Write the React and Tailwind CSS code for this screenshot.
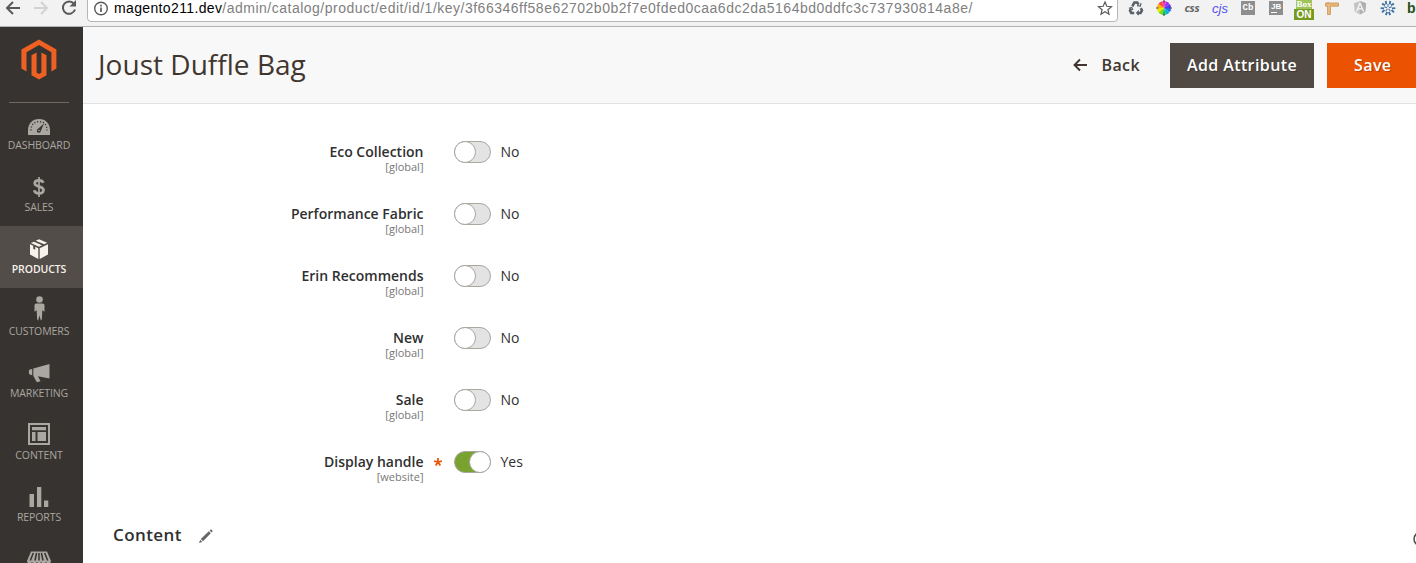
import React from "react";

function MagentoLogo() {
  return (
    <svg width="36" height="42" viewBox="0 0 36 42" fill="#ee6123">
      <path d="M18 0.5 35.4 10.5V29.5L30.4 32.4V13.2L18 6 5.5 13.2V32.4L0.4 29.5V10.5Z" />
      <path d="M10.5 16.3 15.6 13.4V33.5L18 35 20.4 33.5V13.4L25.5 16.3V36.2L18 40.6 10.5 36.2Z" />
    </svg>
  );
}

const icons = {
  dashboard: (
    <svg width="24" height="24" viewBox="0 0 24 24">
      <path d="M1 20V15.5C1 8.500 5.500 4 12 4s11 4.500 11 11.500V20Z" fill="currentColor" />
      <path d="M4 15.500C4 9.500 7 6.700 12 6.700s8 2.800 8 8.800" fill="none" stroke="#373330" strokeWidth="1.300" strokeDasharray="1.200 1.700" />
      <path d="M17 8.500 13.800 16a2 2 0 1 1-3-2Z" fill="#373330" />
      <circle cx="12" cy="15.500" r=".8" fill="currentColor" />
    </svg>
  ),
  sales: (
    <svg width="24" height="24" viewBox="0 0 24 24" fill="none" stroke="currentColor">
      <path d="M16.300 7.800C15.700 6 14 5.300 12 5.300c-2.600 0-4.300 1.100-4.300 3 0 4.300 8.800 2.300 8.800 6.700 0 2-1.800 3.400-4.500 3.400-2.500 0-4.300-1-4.800-3.200" strokeWidth="2.700" />
      <path d="M12 2v20" strokeWidth="1.700" />
    </svg>
  ),
  products: (
    <svg width="24" height="24" viewBox="0 0 24 24" fill="currentColor">
      <path d="m8.700 3.800 3.300-1.600 8.200 3.500-3 1.500ZM7 4.700l8 3.600-3 1.400-8.200-3.600Z" />
      <path d="m3 7.300 3.200 1.400v3l2 1.100V9.700l3.100 1.500V22L3 17.600ZM21 7.300v10.300L12.700 22V11.200Z" />
    </svg>
  ),
  customers: (
    <svg width="24" height="26" viewBox="0 0 24 26" fill="currentColor">
      <circle cx="12.500" cy="4.500" r="3.300" />
      <path d="M9.500 8.600h6c1.400 0 2 .8 2 2v6.200l-2.200-1.500-.4 9-1.100 1.200-1.300-5-1.300 5-1.100-1.200-.4-9-2.200 1.500v-6.200c0-1.200.6-2 2-2Z" />
    </svg>
  ),
  marketing: (
    <svg width="24" height="24" viewBox="0 0 24 24" fill="currentColor">
      <path d="M22.500 3v14.500L11 15.200l2.500 5-3.700 1-3.500-6.500V7.500ZM5.200 7.900v6.300l-2.500-.7c-1.200-.8-1.200-4.200 0-5Z" />
    </svg>
  ),
  content: (
    <svg width="24" height="24" viewBox="0 0 24 24">
      <path d="M2 2h20v20H2Z" fill="none" stroke="currentColor" strokeWidth="2" />
      <path d="M5 5h14v3.200H5ZM5 10h3.500v9H5ZM10.500 10H19v9h-8.500Z" fill="currentColor" />
    </svg>
  ),
  reports: (
    <svg width="24" height="24" viewBox="0 0 24 24" fill="currentColor">
      <path d="M2.500 9H7v13H2.500ZM10 2h4.300v20H10ZM17 15.500h4.300V22H17Z" />
    </svg>
  ),
  stores: (
    <svg width="24" height="24" viewBox="0 0 24 24">
      <path d="M4 4.500h16l4 9.500c0 3-4 3-5 1-1.300 2-4 2-4.700 0-.8 1.500-3.800 1.500-4.600 0-.7 2-3.400 2-4.700 0-1 2-5 2-5-1Z" fill="currentColor" />
      <path d="M6.300 6 3.300 13.500M9.600 6l-1.600 7.500M14.400 6l1.600 7.500M17.700 6l3 7.500M12 6v7.500" stroke="#373330" strokeWidth="1.500" />
      <path d="M4 17v5h16v-5" fill="none" stroke="currentColor" strokeWidth="2" />
    </svg>
  ),
};

const menu = [
  ["dashboard", "DASHBOARD", ""],
  ["sales", "SALES", "-mt-[2px] mb-[2px]"],
  ["products", "PRODUCTS", "-mt-[2px] mb-[2px]"],
  ["customers", "CUSTOMERS", "-mt-[5px] mb-[5px]"],
  ["marketing", "MARKETING", "-mt-[2px] mb-[2px]"],
  ["content", "CONTENT", "-mt-[3px] mb-[3px]"],
  ["reports", "REPORTS", "-mt-[2px] mb-[2px]"],
  ["stores", "", "-mt-[2px] mb-[2px]"],
];

const attributes = [
  { label: "Eco Collection", scope: "[global]" },
  { label: "Performance Fabric", scope: "[global]" },
  { label: "Erin Recommends", scope: "[global]" },
  { label: "New", scope: "[global]" },
  { label: "Sale", scope: "[global]" },
  { label: "Display handle", scope: "[website]", on: true, required: true },
];

const wheel = ["#f43bb0", "#a52bf0", "#5a35f5", "#2a6cf0", "#00b5d8", "#22c45c", "#7ede00", "#efe600", "#ffb400", "#ff4a3a"];

function point(angle, r) {
  const a = (angle * Math.PI) / 180;
  return `${8 + r * Math.sin(a)} ${8 - r * Math.cos(a)}`;
}

function Extensions() {
  return (
    <div className="flex h-4 shrink-0 [&>span]:flex [&>span]:w-7 [&>span]:shrink-0 [&>span]:items-center [&>span]:justify-center">
      <span>
        <svg width="16" height="16" viewBox="0 0 16 16" fill="none" stroke="#56606b" strokeWidth="2.500">
          <path d="M4.300 6.300 6.300 2.600h3l1.300 2M12.800 8.200l1.200 2.300-1.400 2.400H9.600M6.200 12.900H3.300L2 10.500 3.200 8.700" />
          <path d="m9 5.600 3.300.5.700-3M10.700 10.700 8.700 13l2 2M1 8.400l2.800-1L4.900 10" strokeWidth="1.200" />
        </svg>
      </span>
      <span>
        <svg width="16" height="16" viewBox="0 0 16 16">
          {wheel.map((c, i) => (
            <path key={c} fill={c} d={`M8 8 L${point(i * 36 - 18, 6.8)} L${point(i * 36, 7.2)} L${point(i * 36 + 18, 6.8)}Z`} />
          ))}
          <path d="M8 0v2.500M8 13.500V16M0 8h2.500M13.500 8H16" stroke="#444" strokeWidth="1" />
        </svg>
      </span>
      <span className="-mt-px font-['Open_Sans',sans-serif] text-[11px] font-bold italic leading-none tracking-[-0.2px] text-[#666]">css</span>
      <span className="font-['Liberation_Sans',sans-serif] text-[13px] italic leading-none text-[#5252f0]">cjs</span>
      <span>
        <b className="flex h-[14px] w-[14px] items-center justify-center bg-[#8e8e8e] font-['Liberation_Mono',monospace] text-[9px] leading-none text-white">Cb</b>
      </span>
      <span>
        <b className="flex h-[14px] w-[14px] flex-col bg-[#8e8e8e] pl-[2px] pt-[2px] font-['Liberation_Sans',sans-serif] text-[8px] leading-none text-white">
          JB
          <i className="mt-[1px] h-px w-[6px] bg-white" />
        </b>
      </span>
      <span>
        <b className="mt-1 flex h-5 w-5 shrink-0 flex-col items-center font-['Liberation_Sans',sans-serif] leading-none text-white">
          <i className="flex h-[9px] w-4 shrink-0 items-center justify-center bg-[#a0c35c] font-['Liberation_Serif',serif] text-[9px] not-italic leading-[9px]">Box</i>
          <i className="flex h-[11px] w-5 shrink-0 items-center justify-center bg-[#779b20] text-[10px] not-italic leading-[11px]">ON</i>
        </b>
      </span>
      <span>
        <svg width="16" height="16" viewBox="0 0 16 16">
          <path d="M1.500 3h13v3.200h-8v8.300H3.500V6.200h-2Z" fill="#e9b777" stroke="#c68d4e" strokeWidth=".7" />
          <path d="M4 2v1.500" stroke="#c68d4e" />
        </svg>
      </span>
      <span>
        <svg width="14" height="16" viewBox="0 0 16 16">
          <path d="m8 0 7 2.500-1 9.500L8 15.500 2 12 1 2.500Z" fill="#c4c4c4" />
          <path d="m8 0 7 2.500-1 9.500L8 15.500Z" fill="#b0b0b0" />
          <path d="M4 12 8 2.500l4 9.500M5.700 9h4.600" fill="none" stroke="#f6f6f6" strokeWidth="1.500" />
        </svg>
      </span>
      <span>
        <svg width="16" height="16" viewBox="0 0 16 16">
          {[0, 72, 144, 216, 288].map((a) => (
            <g key={a} transform={`rotate(${a} 8 8)`} fill="none" stroke="#3b6fa5">
              <path d="M8 7V4" strokeWidth="1" />
              <path d="M5.700 1 6.300 4.300M10.300 1 9.700 4.300" strokeWidth="1.800" />
            </g>
          ))}
        </svg>
      </span>
      <b className="flex items-center pl-[5px] font-['Liberation_Sans',sans-serif] text-[14px] leading-none text-[#255216]">b</b>
    </div>
  );
}

function BrowserBar() {
  return (
    <div className="flex h-[27px] shrink-0 overflow-hidden border-b border-[#b2b2b2] bg-[#f2f2f2]">
      <div className="flex w-[87px] shrink-0 pl-[5px]">
        <svg width="80" height="17" viewBox="0 0 80 17" fill="none" strokeWidth="2">
          <path d="M15 8H2M8 2 2 8l6 6" stroke="#5a5a5a" />
          <path d="M29 8h13M36 2l6 6-6 6" stroke="#d2d2d2" />
          <path d="M69 3.800A6.200 6.200 0 1 0 70 9.500" stroke="#5a5a5a" />
          <path d="M71 0v6.500h-6.500Z" fill="#5a5a5a" />
        </svg>
      </div>
      <div className="-mt-1 flex h-[26px] w-[1031px] shrink-0 rounded-[4px] border border-[#b6b6b6] bg-white pt-[3px]">
        <svg className="ml-[6px] mt-px shrink-0" width="15" height="15" viewBox="0 0 15 15" fill="none" stroke="#5a5a5a">
          <circle cx="7" cy="7.500" r="6.300" strokeWidth="1.400" />
          <path d="M7 6.500V11M7 3.800v1.600" strokeWidth="1.700" />
        </svg>
        <div className="ml-[5px] whitespace-nowrap font-['Liberation_Sans',sans-serif] text-[14px] leading-[17px] text-[#808080]">
          <span className="tracking-[0.36px] text-black">magento211.dev</span>
          <span className="tracking-[0.5px]">/admin/catalog/product/edit/id/1/key/3f66346ff58e62702b0b2f7e0fded0caa6dc2da5164bd0ddfc3c737930814a8e/</span>
        </div>
        <svg className="ml-auto mr-[4px] shrink-0" width="16" height="16" viewBox="0 0 16 16">
          <path d="m8 2 1.800 4.300 4.700.4-3.600 3 1.100 4.500-4-2.400-4 2.400 1.100-4.500-3.600-3 4.700-.4Z" fill="none" stroke="#5a5a5a" strokeWidth="1.200" />
        </svg>
      </div>
      <div className="ml-[4px] flex">
        <Extensions />
      </div>
    </div>
  );
}

function Toggle({ on }) {
  return (
    <span className={`flex h-[22px] w-[37px] shrink-0 rounded-full border border-[#aaa6a0] ${on ? "justify-end bg-[#79a22e]" : "bg-[#e3e3e3]"}`}>
      <span className="-m-px h-[22px] w-[22px] rounded-full border border-[#aaa6a0] bg-white" />
    </span>
  );
}

export default function App() {
  return (
    <div className="flex h-[563px] w-[1416px] flex-col overflow-hidden bg-white font-['Open_Sans',sans-serif] text-[#303030]">
      <BrowserBar />
      <div className="flex min-h-0 flex-1">
        <aside className="flex w-[83px] shrink-0 flex-col overflow-hidden bg-[#373330]">
          <div className="flex h-[75px] shrink-0 justify-center pr-[5px] pt-[12px]">
            <MagentoLogo />
          </div>
          <div className="ml-[9px] h-px w-[60px] shrink-0 bg-[#736963]" />
          <nav className="-mt-px flex flex-col">
            {menu.map(([icon, label, offset]) => (
              <div
                key={icon}
                className={`flex h-[62px] shrink-0 flex-col items-center pr-[5px] pt-[13px] text-[10.500px] leading-[14px] tracking-[-0.1px] ${
                  icon === "products" ? "bg-[#524d49] font-semibold text-[#f7f3eb]" : "text-[#aaa6a0]"
                }`}
              >
                <span className={`flex h-[23px] items-center ${offset}`}>{icons[icon]}</span>
                <span>{label}</span>
              </div>
            ))}
          </nav>
        </aside>
        <main className="flex min-w-0 flex-1 flex-col overflow-hidden">
          <header className="flex h-[77px] shrink-0 items-center border-b border-[#e3e3e3] bg-[#f8f8f8] pl-[15px]">
            <h1 className="-mt-[2px] whitespace-nowrap text-[28px] leading-[40px] tracking-[0.03px] text-[#41362f]">Joust Duffle Bag</h1>
            <div className="ml-auto flex shrink-0 items-center text-[16px] font-semibold tracking-[0.4px]">
              <div className="mr-[30px] flex items-center gap-[13px] text-[#41362f]">
                <svg width="15" height="14" viewBox="0 0 15 14" fill="none" stroke="currentColor" strokeWidth="1.900">
                  <path d="M14 7H1.500M7 1.500 1.500 7 7 12.500" />
                </svg>
                Back
              </div>
              <div className="flex h-[45px] w-[144px] items-center justify-center bg-[#514943] text-white [text-shadow:1px_1px_0_rgba(0,0,0,.25)]">Add Attribute</div>
              <div className="ml-[13px] flex h-[45px] w-[89px] items-center bg-[#eb5202] pl-[27px] text-white [text-shadow:1px_1px_0_rgba(0,0,0,.25)]">Save</div>
            </div>
          </header>
          <section className="flex flex-col pt-[37px]">
            {attributes.map((a) => (
              <div key={a.label} className="flex h-[62px] items-start">
                <div className="flex w-[340.500px] flex-col items-end whitespace-nowrap">
                  <span className="text-[14px] font-semibold leading-[22px]">{a.label}</span>
                  <span className="-mt-[3px] text-[11px] leading-[14px] text-[#777]">{a.scope}</span>
                </div>
                <span className="flex h-[22px] w-[30.500px] items-center justify-center pr-[2px]">
                  {a.required && (
                    <svg width="10" height="10" viewBox="0 0 10 10" stroke="#eb5202" strokeWidth="1.700">
                      <path d="M5 5V1M5 5l3.900-.9M5 5l2.300 3.500M5 5 2.700 8.500M5 5l-3.900-.9" />
                    </svg>
                  )}
                </span>
                <Toggle on={a.on} />
                <span className="ml-[9.500px] text-[14px] leading-[22px]">{a.on ? "Yes" : "No"}</span>
              </div>
            ))}
          </section>
          <div className="mt-[10px] flex h-[24px] shrink-0 items-center pl-[30px]">
            <h2 className="text-[17px] font-semibold leading-[24px] tracking-[0.4px]">Content</h2>
            <svg className="ml-[16px] mt-[2px]" width="15" height="15" viewBox="0 0 15 15" fill="#666">
              <path d="m10.800 2.300 2 2L5 12.200l-2.200-2.100ZM11.600 1.500l.7-.7c.4-.4.8-.4 1.200 0l.8.800c.4.400.4.800 0 1.200l-.7.700ZM2.200 10.800l2.100 2.100-3.300 1Z" />
            </svg>
            <svg className="ml-auto mt-[7px] shrink-0" width="3" height="16" viewBox="0 0 3 16" fill="none" stroke="#514943" strokeWidth="1.500">
              <circle cx="7.500" cy="8" r="6.500" />
            </svg>
          </div>
        </main>
      </div>
    </div>
  );
}
